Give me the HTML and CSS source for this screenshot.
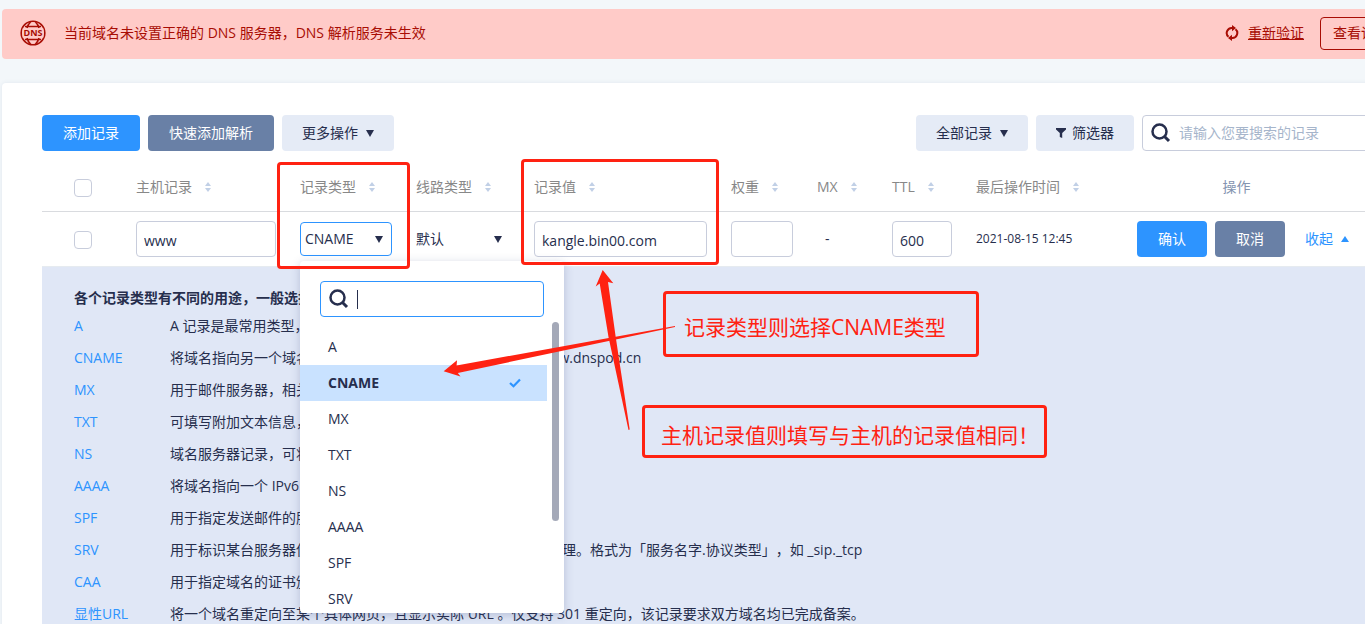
FILE: index.html
```html
<!DOCTYPE html>
<html lang="zh-CN">
<head>
<meta charset="utf-8">
<title>DNS 解析记录</title>
<link rel="stylesheet" href="styles.css">
</head>
<body>
<svg class="defs" aria-hidden="true">
  <symbol id="sort" viewBox="0 0 6 10"><path d="M0 4 3 0l3 4zM0 6h6L3 10z" fill="#c1d0e6"/></symbol>
  <symbol id="down" viewBox="0 0 8 7"><path d="M0 0h8L4 7z" fill="currentColor"/></symbol>
  <symbol id="search" viewBox="0 0 20 20"><circle cx="8.500" cy="8.500" r="7" fill="none" stroke="currentColor" stroke-width="2.500"/><path d="M13.500 13.500 18 18" stroke="currentColor" stroke-width="3"/></symbol>
</svg>
<div class="app">
  <section class="banner">
    <svg class="globe" viewBox="0 0 26 26" aria-hidden="true">
      <g fill="none" stroke="#a80d04" stroke-width="1.600">
        <circle cx="13" cy="13" r="11.800"/>
        <path d="M10.500 2C8.500 4 7.500 6 7 8M15.500 2c2 2 3 4 3.500 6M10.500 24c-2-2-3-4-3.500-6M15.500 24c2-2 3-4 3.500-6M5 6.500h16M5 19.500h16"/>
      </g>
      <path d="M2.500 8.500h21v9h-21z" fill="#ffcbc8"/>
      <text x="13" y="16.300" text-anchor="middle">DNS</text>
    </svg>
    <p class="banner-text">当前域名未设置正确的 DNS 服务器，DNS 解析服务未生效</p>
    <svg class="refresh" viewBox="0 0 14 16" aria-hidden="true">
      <g fill="none" stroke="#a80d04" stroke-width="2"><path d="M3.500 11.800A5 5 0 0 1 7 3h1"/><path d="M10.500 4.200A5 5 0 0 1 7 13H6"/></g>
      <path d="M7 0l4 3-4 3.200zM7 16l-4-3 4-3.200z" fill="#a80d04"/>
    </svg>
    <a class="verify" href="#verify">重新验证</a>
    <button class="guide" type="button">查看详情</button>
  </section>

  <main class="panel">
    <div class="toolbar">
      <button class="btn primary" type="button">添加记录</button>
      <button class="btn slate" type="button">快速添加解析</button>
      <button class="btn pale" type="button">更多操作 <svg class="caret"><use href="#down"/></svg></button>
      <span class="spacer"></span>
      <button class="btn pale" type="button">全部记录 <svg class="caret"><use href="#down"/></svg></button>
      <button class="btn pale" type="button"><svg class="funnel" viewBox="0 0 10 10" aria-hidden="true"><path d="M0 0h10v1.500L6.200 5v5L3.800 9V5L0 1.500z" fill="currentColor"/></svg> 筛选器</button>
      <label class="search"><svg class="lens"><use href="#search"/></svg><input type="search" aria-label="搜索记录" placeholder="请输入您要搜索的记录"></label>
    </div>

    <table class="records">
      <colgroup><col class="c-check"><col class="c-host"><col class="c-type"><col class="c-line"><col class="c-value"><col class="c-weight"><col class="c-mx"><col class="c-ttl"><col class="c-time"><col></colgroup>
      <thead>
        <tr>
          <th class="check"><input type="checkbox" aria-label="全选"></th>
          <th>主机记录<svg class="sort"><use href="#sort"/></svg></th>
          <th>记录类型<svg class="sort"><use href="#sort"/></svg></th>
          <th>线路类型<svg class="sort"><use href="#sort"/></svg></th>
          <th>记录值<svg class="sort"><use href="#sort"/></svg></th>
          <th>权重<svg class="sort"><use href="#sort"/></svg></th>
          <th>MX<svg class="sort"><use href="#sort"/></svg></th>
          <th>TTL<svg class="sort"><use href="#sort"/></svg></th>
          <th>最后操作时间<svg class="sort"><use href="#sort"/></svg></th>
          <th class="ops-head">操作</th>
        </tr>
      </thead>
      <tbody>
        <tr>
          <td class="check"><input type="checkbox" aria-label="选择 www"></td>
          <td><input class="field host" type="text" aria-label="主机记录" value="www"></td>
          <td>
            <div class="picker">
              <select class="type" aria-label="记录类型"><option>CNAME</option></select>
              <svg class="caret on-select"><use href="#down"/></svg>
              <div class="menu">
                <label class="menu-search"><svg class="lens"><use href="#search"/></svg><span class="cursor"></span><input type="text" aria-label="搜索类型"></label>
                <div class="menu-body">
                  <ul class="options">
                    <li>A</li>
                    <li class="chosen">CNAME<svg class="tick" viewBox="0 0 12 10" aria-hidden="true"><path d="M1 5l3.500 3.300L11 1.500" fill="none" stroke="#2d94ff" stroke-width="2.200"/></svg></li>
                    <li>MX</li>
                    <li>TXT</li>
                    <li>NS</li>
                    <li>AAAA</li>
                    <li>SPF</li>
                    <li>SRV</li>
                  </ul>
                  <span class="thumb"></span>
                </div>
              </div>
            </div>
          </td>
          <td><div class="picker line"><select class="plain" aria-label="线路类型"><option>默认</option></select><svg class="caret on-select"><use href="#down"/></svg></div></td>
          <td><input class="field value" type="text" aria-label="记录值" value="kangle.bin00.com"></td>
          <td><input class="field weight" type="text" aria-label="权重"></td>
          <td class="dash">-</td>
          <td><input class="field ttl" type="text" aria-label="TTL" value="600"></td>
          <td class="time">2021-08-15 12:45</td>
          <td>
            <div class="ops">
              <button class="btn primary small" type="button">确认</button>
              <button class="btn slate small" type="button">取消</button>
              <a class="fold" href="#fold">收起<svg class="up" viewBox="0 0 8 6" aria-hidden="true"><path d="M0 6h8L4 0z" fill="currentColor"/></svg></a>
            </div>
          </td>
        </tr>
      </tbody>
    </table>

    <section class="help">
      <h2>各个记录类型有不同的用途，一般选择 A 记录</h2>
      <dl>
        <dt>A</dt><dd>A 记录是最常用类型，将域名指向一个 IPv4 地址</dd>
        <dt>CNAME</dt><dd>将域名指向另一个域名地址，与其保持相同解析，如 http://www.dnspod.cn</dd>
        <dt>MX</dt><dd>用于邮件服务器，相关参数一般由邮件注册商提供</dd>
        <dt>TXT</dt><dd>可填写附加文本信息，常用于域名验证</dd>
        <dt>NS</dt><dd>域名服务器记录，可将指定域名交由其他服务商解析</dd>
        <dt>AAAA</dt><dd>将域名指向一个 IPv6 地址</dd>
        <dt>SPF</dt><dd>用于指定发送邮件的服务器</dd>
        <dt>SRV</dt><dd>用于标识某台服务器使用了某个服务，常见于微软系统的目录管理。格式为「服务名字.协议类型」，如 _sip._tcp</dd>
        <dt>CAA</dt><dd>用于指定域名的证书颁发机构</dd>
        <dt>显性URL</dt><dd>将一个域名重定向至某个具体网页，且显示实际 URL 。仅支持 301 重定向，该记录要求双方域名均已完成备案。</dd>
      </dl>
    </section>
  </main>
</div>

<div class="notes">
  <span class="mark mark-type"></span>
  <span class="mark mark-value"></span>
  <p class="mark note note-type">记录类型则选择CNAME类型</p>
  <p class="mark note note-value">主机记录值则填写与主机的记录值相同！</p>
  <svg class="arrows" aria-hidden="true">
    <g fill="#ff2212">
      <path d="M443.700 371.300 457 360.200l-.4 5.200L675 326v1L457.800 373l2.700 3.500z"/>
      <path d="M602.700 270 613.300 283.300l-5.300-1.300 7.700 55L629.700 429.500l-1.200.5-20-93-8.800-53.500-4 3z"/>
    </g>
  </svg>
</div>
</body>
</html>
```
FILE: styles.css
```css
* { box-sizing: border-box; }

body {
  margin: 0;
  overflow: hidden;
  background: #f3f7fa;
  color: #262e4d;
  font: 14px/20px "Open Sans", "Noto Sans CJK SC", sans-serif;
}

button, input, select { font: inherit; color: inherit; }
h2, p, dl, dd, ul { margin: 0; padding: 0; }
.defs { position: absolute; width: 0; height: 0; }

/* The console is wider than the window and runs off its right edge. */
.app {
  width: calc(100% + 51px);
  margin-left: 2px;
  padding-top: 9px;
}

.banner {
  display: flex;
  align-items: center;
  height: 50px;
  padding: 0 16px 2px 18px;
  border-radius: 4px;
  background: #ffcbc8;
  color: #a80d04;
}
.globe { width: 26px; height: 26px; margin-right: 18px; }
.globe text { font: 700 9px "Open Sans", sans-serif; fill: #a80d04; }
.banner-text { flex: 1; }
.refresh { width: 14px; height: 16px; margin-right: 9px; }
.verify { margin-right: 16px; color: inherit; }
.guide {
  height: 33px;
  padding: 0 12px;
  border: 1px solid #a80d04;
  border-radius: 4px;
  background: none;
}

.panel {
  min-height: 100vh;
  margin-top: 24px;
  padding: 32px 40px;
  border-radius: 4px 4px 0 0;
  background: #fff;
  box-shadow: 0 0 4px rgba(54, 88, 140, .1);
}

.toolbar { display: flex; gap: 8px; }
.spacer { flex: 1; }
.btn {
  display: flex;
  align-items: center;
  justify-content: center;
  height: 36px;
  padding: 0 21px;
  border: 0;
  border-radius: 4px;
  white-space: nowrap;
}
.primary { background: #2d94ff; color: #fff; }
.slate { background: #6980a6; color: #fff; }
.pale { padding: 0 20px; background: #e5ebf6; }
.small { width: 70px; }
.caret { width: 8px; height: 7px; margin-left: 8px; }
.funnel { width: 10px; height: 10px; margin-right: 6px; }

.search {
  display: flex;
  align-items: center;
  width: 236px;
  padding-left: 8px;
  border: 1px solid #c8cddc;
  border-radius: 4px;
}
.lens { flex: none; width: 20px; height: 20px; }
.search input {
  width: 100%;
  min-width: 0;
  margin-left: 8px;
  padding: 0;
  border: 0;
  outline: 0;
  background: none;
}
.search input::placeholder { color: #a6b5cb; }

.records {
  width: 100%;
  margin-top: 12px;
  border-spacing: 0;
  table-layout: fixed;
}
.c-check { width: 94px; }
.c-host { width: 164px; }
.c-type { width: 116px; }
.c-line { width: 118px; }
.c-value { width: 197px; }
.c-weight { width: 86px; }
.c-mx { width: 75px; }
.c-ttl { width: 84px; }
.c-time { width: 161px; }
.records th {
  height: 49px;
  padding: 0;
  border-bottom: 1px solid #d9dbdf;
  color: #888;
  font-weight: 400;
  text-align: left;
}
.records td { height: 55px; padding: 0; border-bottom: 1px solid #e6ebf0; }
.records .check { padding: 2px 0 0 32px; }
.records .ops-head { padding-right: 42px; color: #8494b0; text-align: center; }
.records .dash { padding-left: 8px; }
.records .time { font-size: 12px; }
.sort { width: 6px; height: 10px; margin-left: 13px; }

input[type="checkbox"] {
  display: block;
  width: 18px;
  height: 18px;
  margin: 0;
  border: 1px solid #c8cddc;
  border-radius: 4px;
  background: #fff;
  appearance: none;
}

.field {
  display: block;
  height: 36px;
  padding: 2px 7px 0;
  border: 1px solid #c8cddc;
  border-radius: 4px;
  background: #fff;
}
.host { width: 140px; }
.value { width: 173px; }
.weight { width: 62px; }
.ttl { width: 60px; }

.picker { position: relative; width: 92px; }
.picker select { width: 100%; outline: 0; appearance: none; }
.type {
  display: block;
  height: 34px;
  padding: 0 4px;
  border: 1px solid #2d94ff;
  border-radius: 4px;
  background: #fff;
}
.line { width: 88px; }
.plain { height: 34px; padding: 0; border: 0; background: none; }
.on-select { position: absolute; top: 14px; right: 9px; }
.line .on-select { right: 2px; }

.menu {
  position: absolute;
  z-index: 1;
  top: 39px;
  left: 0;
  width: 264px;
  padding: 20px 0 0;
  border-radius: 4px;
  background: #fff;
  box-shadow: 0 2px 10px rgba(54, 73, 122, .25);
}
.menu-search {
  position: relative;
  display: flex;
  align-items: center;
  height: 36px;
  margin: 0 20px;
  padding: 0 8px;
  border: 1px solid #2d94ff;
  border-radius: 4px;
}
.menu-search input { flex: 1; min-width: 0; margin-left: 8px; padding: 0; border: 0; outline: 0; }
.cursor { position: absolute; left: 36px; width: 1px; height: 19px; background: #262e4d; }
.menu-body { display: flex; align-items: flex-start; gap: 5px; padding-top: 5px; }
.options { width: 247px; height: 291px; padding-top: 7px; overflow: hidden; list-style: none; }
.options li {
  display: flex;
  align-items: center;
  justify-content: space-between;
  height: 36px;
  padding: 0 26px 0 28px;
}
.options .chosen { background: #c9e2ff; font-weight: 700; }
.tick { width: 12px; height: 10px; }
.thumb { width: 7px; height: 199px; border-radius: 4px; background: #a4a9b8; }

.ops { display: flex; align-items: center; gap: 8px; }
.fold { display: flex; align-items: center; gap: 8px; margin-left: 12px; color: #2d94ff; text-decoration: none; }
.up { width: 8px; height: 6px; }

.help { padding: 19px 32px; background: #e0e7f6; }
.help h2 { font-size: 14px; line-height: 24px; }
.help dl { display: grid; grid-template-columns: 96px 1fr; line-height: 32px; }
.help dt { color: #2d94ff; }
.help dd { white-space: nowrap; text-spacing-trim: space-all; }

/* Annotations drawn over the page */
.notes { position: absolute; z-index: 2; inset: 0; overflow: hidden; pointer-events: none; }
.mark { position: absolute; border: 3px solid #ff2212; border-radius: 4px; }
.mark-type { top: 162px; left: 277px; width: 133px; height: 107px; }
.mark-value { top: 159px; left: 521px; width: 198px; height: 106px; }
.note {
  display: flex;
  align-items: center;
  color: #ff2212;
  font-size: 21px;
  line-height: 28px;
  white-space: nowrap;
}
.note-type { top: 291px; left: 663px; width: 316px; height: 66px; padding: 6px 0 0 18px; }
.note-value { top: 405px; left: 642px; width: 405px; height: 53px; padding: 6px 0 0 16px; }
.arrows { position: absolute; top: 0; left: 0; width: 100%; height: 100%; }
```
